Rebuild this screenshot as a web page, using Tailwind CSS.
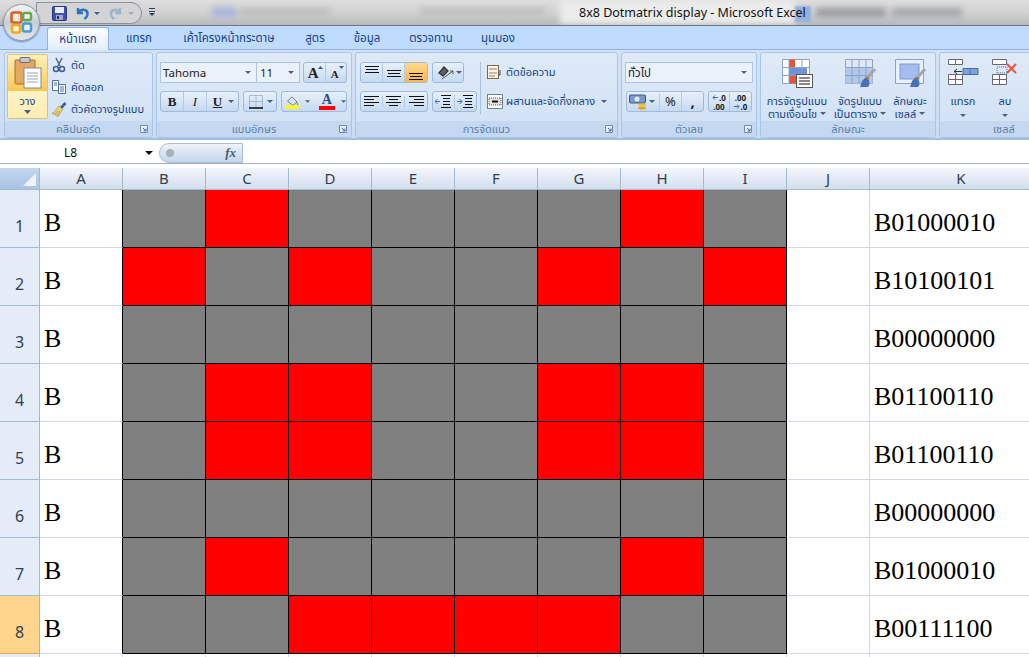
<!DOCTYPE html>
<html lang="th">
<head>
  <meta charset="UTF-8" />
  <title>8x8 Dotmatrix display - Microsoft Excel</title>
  <script src="https://cdn.jsdelivr.net/npm/@tailwindcss/browser@4"></script>
</head>
<body class="relative w-[1029px] h-[657px] overflow-hidden bg-white text-[11px] text-[#15428b] font-['Noto_Sans','Noto_Sans_Thai','Loma','Garuda','DejaVu_Sans',sans-serif]">

  <!-- title bar -->
  <div class="relative h-[26px] border-b border-[#6e7784] bg-gradient-to-b from-[#dedede] via-[#d2d2d2] to-[#b8b9bb] overflow-hidden">
    <div class="absolute left-[212px] top-[7px] w-[24px] h-[10px] bg-[#a9b4dc] blur-[3px]"></div>
    <div class="absolute left-[240px] top-[8px] w-[90px] h-[8px] bg-[#bdbdbd] blur-[3px]"></div>
    <div class="absolute left-[420px] top-[8px] w-[125px] h-[8px] bg-[#bfbfbf] blur-[3px]"></div>
    <div class="absolute left-[560px] top-0 w-[235px] h-[24px] bg-[#ececec] blur-[3px]"></div>
    <div class="absolute left-[795px] top-[6px] w-[16px] h-[16px] bg-[#93b1de] blur-[1px]"></div>
    <div class="absolute left-[816px] top-[8px] w-[70px] h-[9px] bg-[#9a9c9f] blur-[3px]"></div>
    <div class="absolute left-[892px] top-[8px] w-[70px] h-[9px] bg-[#a5a7aa] blur-[3px]"></div>
    <div class="absolute left-[579px] top-[5px] text-[12.500px] leading-[16px] text-[#111] whitespace-nowrap">8x8 Dotmatrix display - Microsoft Excel</div>
    <!-- quick access -->
    <div class="absolute left-[36px] top-[2px] w-[106px] h-[22px] rounded-r-[12px] border border-[#8c9096] bg-[#d2d4d6] flex items-center pl-[15px] gap-[8px]">
      <svg width="15" height="15" viewBox="0 0 15 15"><rect width="14" height="14" x=".5" y=".5" rx="1" fill="#3f51a8" stroke="#28357a"/><rect x="3" y="1" width="9" height="6" fill="#e6ecf8"/><rect x="4" y="9" width="7" height="5" fill="#9fa8cf"/><rect x="5" y="10" width="2" height="3" fill="#28357a"/></svg>
      <svg width="26" height="14" viewBox="0 0 26 14"><path d="M3 2v5h5M3.500 6.500C6 2.500 12 3 12.500 7c.3 2.500-1 4.500-3 6" fill="none" stroke="#2f71bd" stroke-width="2.400"/><path d="M19 6h6l-3 3z" fill="#4a5f84"/></svg>
      <svg width="26" height="14" viewBox="0 0 26 14"><path d="M11 2v5H6M10.500 6.500C8 2.500 2.500 3 2 7c-.3 2.500 1 4.500 3 6" fill="none" stroke="#9db4cb" stroke-width="2.400"/><path d="M19 6h6l-3 3z" fill="#a5adb8"/></svg>
    </div>
    <svg class="absolute left-[149px] top-[8px]" width="7" height="9" viewBox="0 0 7 9"><path d="M0 0h6v1H0zM0 3h6v1H0z" fill="#2c3e63"/><path d="M0 5h6L3 8z" fill="#2c3e63"/></svg>
  </div>

  <!-- office button -->
  <div class="absolute left-[3px] top-[4px] w-[37px] h-[37px] rounded-full border border-[#8e9aa8] bg-gradient-to-b from-[#f4f6f8] via-[#c8ced6] to-[#e4e8ec] shadow-[0_1px_2px_rgba(0,0,0,.4)] flex items-center justify-center z-10">
    <svg width="23" height="23" viewBox="0 0 23 23">
      <rect x="1.500" y="1.500" width="10" height="10" rx="2" fill="#fbeede" stroke="#dd5f26" stroke-width="2.600"/>
      <rect x="13" y="2" width="8" height="7" rx="2" fill="#eef6e6" stroke="#62ab3e" stroke-width="2.400"/>
      <rect x="2" y="14" width="8" height="7.500" rx="2" fill="#fdf3d8" stroke="#f2ab1c" stroke-width="2.600"/>
      <rect x="13" y="12.500" width="8" height="8" rx="2" fill="#e8f2fa" stroke="#4c9ad4" stroke-width="2.400"/>
      <path d="M8 5h7M8 8h7M8 11h7M8 14h7" stroke="#7fa6c8" stroke-dasharray="1.500 1.500"/>
    </svg>
  </div>

  <!-- tabs -->
  <div class="h-[24px] bg-[#bfdbff] flex items-end pl-[47px] text-[11.500px] text-[#15428b] border-b border-[#8db2e3]">
    <div class="relative top-px w-[62px] h-[23px] flex items-center justify-center rounded-t-[3px] border border-b-0 border-[#8db2e3] bg-gradient-to-b from-[#fbfdff] to-[#e3eefb]">หน้าแรก</div>
    <div class="w-[60px] h-[23px] flex items-center justify-center">แทรก</div>
    <div class="w-[120px] h-[23px] flex items-center justify-center">เค้าโครงหน้ากระดาษ</div>
    <div class="w-[52px] h-[23px] flex items-center justify-center">สูตร</div>
    <div class="w-[52px] h-[23px] flex items-center justify-center">ข้อมูล</div>
    <div class="w-[76px] h-[23px] flex items-center justify-center">ตรวจทาน</div>
    <div class="w-[58px] h-[23px] flex items-center justify-center">มุมมอง</div>
  </div>

  <!-- ribbon -->
  <div class="h-[90px] bg-gradient-to-b from-[#d3e3f7] to-[#c8dcf3] border-b-2 border-[#9ec0e6] flex pl-[4px] gap-[3px] pt-[2px] overflow-hidden">

    <!-- clipboard -->
    <section class="w-[149px] shrink-0 flex flex-col rounded-[3px] border border-[#a9c6e6] bg-gradient-to-b from-[#dfeaf8] to-[#d0e1f5] overflow-hidden">
      <div class="flex-1 flex pl-[2px] pt-[1px]">
        <div class="w-[41px] h-[65px] rounded-[2px] border border-[#e0c078] flex flex-col items-center overflow-hidden">
          <div class="w-full h-[36px] bg-gradient-to-b from-[#fff0b8] via-[#ffdc80] to-[#ffc850] flex justify-center pt-[2px]">
            <svg width="28" height="32" viewBox="0 0 28 32"><rect x="1" y="3" width="20" height="24" rx="1" fill="#e4a860" stroke="#a07030"/><rect x="6" y="0.500" width="10" height="5" rx="1" fill="#c4c8d0" stroke="#686c78"/><rect x="10" y="11" width="17" height="20" fill="#fff" stroke="#7a8aa0"/><path d="M13 16h11M13 19h11M13 22h11M13 25h11" stroke="#9aa4b4"/></svg>
          </div>
          <div class="w-full flex-1 bg-gradient-to-b from-[#fff4c8] to-[#ffecb0] flex flex-col items-center pt-[3px] leading-[14px] text-[#15428b]">
            <span>วาง</span>
            <svg class="mt-[2px]" width="7" height="4" viewBox="0 0 7 4"><path d="M0 0h7L3.500 4z" fill="#4a5f84"/></svg>
          </div>
        </div>
        <div class="flex flex-col pt-[3px] pl-[3px] gap-[6px] leading-[16px]">
          <div class="flex items-center gap-[4px] h-[16px]"><svg width="16" height="16" viewBox="0 0 16 16"><path d="M5 1l4 8M11 1L7 9" stroke="#54677f" stroke-width="1.500" fill="none"/><circle cx="5" cy="12" r="2.500" fill="none" stroke="#3a5a9a" stroke-width="1.500"/><circle cx="11" cy="12" r="2.500" fill="none" stroke="#3a5a9a" stroke-width="1.500"/></svg><span>ตัด</span></div>
          <div class="flex items-center gap-[4px] h-[16px]"><svg width="16" height="16" viewBox="0 0 16 16"><path d="M1.500 1.500h6v10h-6z" fill="#fff" stroke="#4a70a8"/><path d="M7.500 5.500h7v9h-7z" fill="#fff" stroke="#4a70a8"/><path d="M3 4h3M3 6h3M9 8h4M9 10h4M9 12h4" stroke="#4a70a8"/></svg><span>คัดลอก</span></div>
          <div class="flex items-center gap-[4px] h-[16px]"><svg width="16" height="16" viewBox="0 0 16 16"><path d="M9 6l4.500-5 2 2L11 8z" fill="#4a5a8a"/><path d="M8 5l3.500 3.500L7 15.500 1 12c2 0 4-2 4-4z" fill="#ecd27c" stroke="#a08840" stroke-width=".6"/><path d="M4 13l3-3M6 14l3-4" stroke="#a08840" stroke-width=".7"/></svg><span>ตัวคัดวางรูปแบบ</span></div>
        </div>
      </div>
      <div class="relative h-[16px] bg-[#c4d9f1] text-center leading-[15px] text-[#5b7ea8]">คลิปบอร์ด<svg class="absolute right-[4px] top-[4px]" width="8" height="8" viewBox="0 0 8 8"><path d="M.5.500h7v7h-7z" fill="#e8f0fa" stroke="#6f8fb4"/><path d="M3 3l3 3M6 3.500V6H3.500" stroke="#4a6a94" fill="none"/></svg></div>
    </section>

    <!-- font -->
    <section class="w-[196px] shrink-0 flex flex-col rounded-[3px] border border-[#a9c6e6] bg-gradient-to-b from-[#dfeaf8] to-[#d0e1f5] overflow-hidden">
      <div class="flex-1 flex flex-col pl-[3px] pt-[9px] gap-[8px]">
        <div class="flex h-[21px]">
          <div class="w-[97px] flex items-center justify-between px-[2px] pr-[5px] border border-[#a9c6e6] bg-[#eaf1fb] text-[11.500px] text-[#222]">Tahoma<svg width="6" height="3" viewBox="0 0 6 3"><path d="M0 0h6L3 3z" fill="#4a5f84"/></svg></div>
          <div class="w-[43px] flex items-center justify-between px-[3px] pr-[5px] border border-l-0 border-[#a9c6e6] bg-[#eaf1fb] text-[11.500px] text-[#222]">11<svg width="6" height="3" viewBox="0 0 6 3"><path d="M0 0h6L3 3z" fill="#4a5f84"/></svg></div>
          <div class="ml-[3px] w-[44px] flex rounded-[3px] border border-[#9ebbdc] bg-gradient-to-b from-[#e8f1fb] to-[#c5d9f1] font-['Liberation_Serif',serif] font-bold text-[#222]">
            <span class="relative w-[23px] pr-[3px] text-[15px] text-center leading-[21px] border-r border-[#b4cbe4]">A<svg class="absolute right-[2px] top-[3px]" width="5" height="3" viewBox="0 0 5 3"><path d="M0 3h5L2.500 0z" fill="#3a5f94"/></svg></span><span class="relative w-[20px] pr-[3px] text-[11px] text-center leading-[23px]">A<svg class="absolute right-[2px] top-[3px]" width="5" height="3" viewBox="0 0 5 3"><path d="M0 0h5L2.500 3z" fill="#3a5f94"/></svg></span>
          </div>
        </div>
        <div class="flex h-[21px] gap-[4px]">
          <div class="w-[79px] flex rounded-[3px] border border-[#9ebbdc] bg-gradient-to-b from-[#e8f1fb] to-[#c5d9f1] text-[#222] font-['Liberation_Serif',serif] text-[13px] leading-[19px]">
            <span class="w-[23px] text-center font-bold border-r border-[#b4cbe4]">B</span>
            <span class="w-[23px] text-center italic border-r border-[#b4cbe4]">I</span>
            <span class="w-[21px] text-center underline font-bold">U</span>
            <span class="w-[10px] flex items-center"><svg width="6" height="3" viewBox="0 0 6 3"><path d="M0 0h6L3 3z" fill="#4a5f84"/></svg></span>
          </div>
          <div class="w-[34px] flex items-center gap-[4px] pl-[5px] rounded-[3px] border border-[#9ebbdc] bg-gradient-to-b from-[#e8f1fb] to-[#c5d9f1]">
            <svg width="14" height="14" viewBox="0 0 14 14"><path d="M.5.500h13v12h-13zM7 .500v12M.5 6.500h13" fill="none" stroke="#7f8fa4" stroke-dasharray="1 1"/><path d="M0 13h14" stroke="#111" stroke-width="1.500"/></svg>
            <svg width="6" height="3" viewBox="0 0 6 3"><path d="M0 0h6L3 3z" fill="#4a5f84"/></svg>
          </div>
          <div class="w-[66px] flex items-center pl-[3px] rounded-[3px] border border-[#9ebbdc] bg-gradient-to-b from-[#e8f1fb] to-[#c5d9f1]">
            <svg width="17" height="16" viewBox="0 0 17 16"><path d="M3 7l5-5 6 6-5 4z" fill="#dfe6f0" stroke="#5a6a84"/><path d="M14 8c1 1.500 2 3 1 3.500s-1.500-1-1-3.500z" fill="#c46a3a"/><rect y="12" width="16" height="4" fill="#ffff00"/></svg>
            <svg class="ml-[5px]" width="6" height="3" viewBox="0 0 6 3"><path d="M0 0h6L3 3z" fill="#4a5f84"/></svg>
            <div class="ml-[9px] w-[16px] flex flex-col items-center font-['Liberation_Serif',serif] font-bold text-[14px] leading-[12px] text-[#2b4c8c]">A<span class="w-[16px] h-[4px] bg-[#ff0000]"></span></div>
            <svg class="ml-[6px]" width="6" height="3" viewBox="0 0 6 3"><path d="M0 0h6L3 3z" fill="#4a5f84"/></svg>
          </div>
        </div>
      </div>
      <div class="relative h-[16px] bg-[#c4d9f1] text-center leading-[15px] text-[#5b7ea8]">แบบอักษร<svg class="absolute right-[4px] top-[4px]" width="8" height="8" viewBox="0 0 8 8"><path d="M.5.500h7v7h-7z" fill="#e8f0fa" stroke="#6f8fb4"/><path d="M3 3l3 3M6 3.500V6H3.500" stroke="#4a6a94" fill="none"/></svg></div>
    </section>

    <!-- alignment -->
    <section class="w-[263px] shrink-0 flex flex-col rounded-[3px] border border-[#a9c6e6] bg-gradient-to-b from-[#dfeaf8] to-[#d0e1f5] overflow-hidden">
      <div class="flex-1 flex pl-[4px] pt-[9px]">
        <div class="flex flex-col gap-[8px]">
          <div class="flex h-[21px] gap-[4px]">
            <div class="w-[68px] flex rounded-[3px] border border-[#9ebbdc] bg-gradient-to-b from-[#e8f1fb] to-[#c5d9f1] overflow-hidden">
              <span class="w-[22px] flex justify-center pt-[3px] border-r border-[#b4cbe4]"><svg width="14" height="8" viewBox="0 0 14 8"><path d="M0 .500h14M1 3.500h12M0 6.500h14" stroke="#111"/></svg></span>
              <span class="w-[22px] flex justify-center pt-[7px] border-r border-[#b4cbe4]"><svg width="14" height="8" viewBox="0 0 14 8"><path d="M0 .500h14M1 3.500h12M0 6.500h14" stroke="#111"/></svg></span>
              <span class="w-[22px] flex justify-center pt-[10px] bg-gradient-to-b from-[#ffd98a] to-[#ffb44a]"><svg width="14" height="8" viewBox="0 0 14 8"><path d="M0 .500h14M1 3.500h12M0 6.500h14" stroke="#111"/></svg></span>
            </div>
            <div class="w-[32px] flex items-center gap-[1px] pl-[4px] rounded-[3px] border border-[#9ebbdc] bg-gradient-to-b from-[#e8f1fb] to-[#c5d9f1]">
              <svg width="18" height="16" viewBox="0 0 18 16"><path d="M2 8l5-6 4 4-5 5z" fill="#5a6070" stroke="#333" stroke-width="1.300"/><path d="M5 14L16 6M13 6h3v3" fill="none" stroke="#555"/></svg>
              <svg width="6" height="3" viewBox="0 0 6 3"><path d="M0 0h6L3 3z" fill="#4a5f84"/></svg>
            </div>
          </div>
          <div class="flex h-[21px] gap-[4px]">
            <div class="w-[68px] flex items-center rounded-[3px] border border-[#9ebbdc] bg-gradient-to-b from-[#e8f1fb] to-[#c5d9f1]">
              <span class="w-[22px] flex justify-center border-r border-[#b4cbe4]"><svg width="15" height="11" viewBox="0 0 15 11"><path d="M0 .500h15M0 3.500h10M0 6.500h15M0 9.500h10" stroke="#111"/></svg></span>
              <span class="w-[22px] flex justify-center border-r border-[#b4cbe4]"><svg width="15" height="11" viewBox="0 0 15 11"><path d="M0 .500h15M3 3.500h9M0 6.500h15M3 9.500h9" stroke="#111"/></svg></span>
              <span class="w-[22px] flex justify-center"><svg width="15" height="11" viewBox="0 0 15 11"><path d="M0 .500h15M5 3.500h10M0 6.500h15M5 9.500h10" stroke="#111"/></svg></span>
            </div>
            <div class="w-[45px] flex items-center rounded-[3px] border border-[#9ebbdc] bg-gradient-to-b from-[#e8f1fb] to-[#c5d9f1]">
              <span class="w-[22px] flex justify-center border-r border-[#b4cbe4]"><svg width="16" height="13" viewBox="0 0 16 13"><path d="M6 .500h10M8 3.500h7M8 6.500h7M8 9.500h7M6 12.500h10" stroke="#111"/><path d="M5 6.500H0M2.500 4L0 6.500 2.500 9" stroke="#3a6fc0" fill="none"/></svg></span>
              <span class="w-[22px] flex justify-center"><svg width="16" height="13" viewBox="0 0 16 13"><path d="M6 .500h10M8 3.500h7M8 6.500h7M8 9.500h7M6 12.500h10" stroke="#111"/><path d="M0 6.500h5M2.500 4L5 6.500 2.500 9" stroke="#3a6fc0" fill="none"/></svg></span>
            </div>
          </div>
        </div>
        <div class="ml-[3px] w-px h-[52px] bg-[#a9c2de]"></div>
        <div class="flex flex-col gap-[8px] pl-[6px]">
          <div class="h-[21px] flex items-center gap-[3px]"><svg width="16" height="15" viewBox="0 0 16 15"><rect x=".5" y=".5" width="11" height="13" fill="#f6f3ea" stroke="#7a6a50"/><path d="M2 4h8M2 8h8M2 11h6" stroke="#b07840"/><path d="M13 5v5h-2" stroke="#444" fill="none"/></svg><span>ตัดข้อความ</span></div>
          <div class="h-[21px] flex items-center gap-[3px]"><svg width="16" height="15" viewBox="0 0 16 15"><rect x=".5" y=".5" width="15" height="14" fill="#fff" stroke="#708090"/><rect x="2" y="4" width="12" height="7" fill="#e6e6e6" stroke="#555" stroke-dasharray="1 1"/><path d="M5 7.500h6" stroke="#111" stroke-width="2"/></svg><span>ผสานและจัดกึ่งกลาง</span><svg class="ml-[3px]" width="6" height="3" viewBox="0 0 6 3"><path d="M0 0h6L3 3z" fill="#4a5f84"/></svg></div>
        </div>
      </div>
      <div class="relative h-[16px] bg-[#c4d9f1] text-center leading-[15px] text-[#5b7ea8]">การจัดแนว<svg class="absolute right-[4px] top-[4px]" width="8" height="8" viewBox="0 0 8 8"><path d="M.5.500h7v7h-7z" fill="#e8f0fa" stroke="#6f8fb4"/><path d="M3 3l3 3M6 3.500V6H3.500" stroke="#4a6a94" fill="none"/></svg></div>
    </section>

    <!-- number -->
    <section class="w-[136px] shrink-0 flex flex-col rounded-[3px] border border-[#a9c6e6] bg-gradient-to-b from-[#dfeaf8] to-[#d0e1f5] overflow-hidden">
      <div class="flex-1 flex flex-col pl-[3px] pt-[9px] gap-[8px]">
        <div class="w-[128px] h-[21px] flex items-center justify-between pl-[2px] pr-[5px] border border-[#a9c6e6] bg-[#eaf1fb] text-[11.500px] text-[#222]">ทั่วไป<svg width="6" height="3" viewBox="0 0 6 3"><path d="M0 0h6L3 3z" fill="#4a5f84"/></svg></div>
        <div class="flex h-[21px] gap-[4px] pl-[1px]">
          <div class="w-[78px] flex items-center rounded-[3px] border border-[#9ebbdc] bg-gradient-to-b from-[#e8f1fb] to-[#c5d9f1] text-[#222]">
            <span class="w-[33px] flex items-center gap-[2px] pl-[2px] border-r border-[#b4cbe4]"><svg width="18" height="16" viewBox="0 0 18 16"><rect x=".5" y="1" width="16" height="8" rx="1" fill="#7a9ac8" stroke="#3a5a8a"/><circle cx="8" cy="5" r="2.500" fill="#dce8f6"/><ellipse cx="13" cy="11" rx="4" ry="1.500" fill="#f0c030"/><ellipse cx="13" cy="14" rx="4" ry="1.500" fill="#e0a820"/></svg><svg width="6" height="3" viewBox="0 0 6 3"><path d="M0 0h6L3 3z" fill="#4a5f84"/></svg></span>
            <span class="w-[23px] text-center text-[13px] leading-[19px] border-r border-[#b4cbe4]">%</span>
            <span class="w-[21px] text-center text-[15px] font-bold leading-[15px]">,</span>
          </div>
          <div class="w-[44px] flex items-center rounded-[3px] border border-[#9ebbdc] bg-gradient-to-b from-[#e8f1fb] to-[#c5d9f1] text-[8px] leading-[9px] font-bold text-[#222]">
            <span class="w-[21px] flex flex-col items-center border-r border-[#b4cbe4]"><span class="flex items-center gap-px"><svg width="6" height="5" viewBox="0 0 6 5"><path d="M6 2.500H1M3 .5l-2 2 2 2" stroke="#3a6fc0" fill="none"/></svg>.0</span><span>.00</span></span>
            <span class="w-[21px] flex flex-col items-center"><span>.00</span><span class="flex items-center gap-px"><svg width="6" height="5" viewBox="0 0 6 5"><path d="M0 2.500h5M3 .5l2 2-2 2" stroke="#3a6fc0" fill="none"/></svg>.0</span></span>
          </div>
        </div>
      </div>
      <div class="relative h-[16px] bg-[#c4d9f1] text-center leading-[15px] text-[#5b7ea8]">ตัวเลข<svg class="absolute right-[4px] top-[4px]" width="8" height="8" viewBox="0 0 8 8"><path d="M.5.500h7v7h-7z" fill="#e8f0fa" stroke="#6f8fb4"/><path d="M3 3l3 3M6 3.500V6H3.500" stroke="#4a6a94" fill="none"/></svg></div>
    </section>

    <!-- styles -->
    <section class="w-[176px] shrink-0 flex flex-col rounded-[3px] border border-[#a9c6e6] bg-gradient-to-b from-[#dfeaf8] to-[#d0e1f5] overflow-hidden">
      <div class="flex-1 flex pl-[5px] pt-[6px] leading-[13px] text-center">
        <div class="w-[62px] flex flex-col items-center">
          <svg width="31" height="29" viewBox="0 0 31 29"><path d="M.5.500h27v24H.5z" fill="#fff" stroke="#8ea4be"/><path d="M7 .500h6v8H7z" fill="#e5533a"/><path d="M7 8.500h18v8H7z" fill="#6a92d8"/><path d="M7 16.500h12v8H7z" fill="#e5533a"/><path d="M7 0v25M20 0v25M0 8.500h28M0 16.500h28" stroke="#8ea4be"/><rect x="14.500" y="15.500" width="16" height="13" fill="#fff" stroke="#555"/><path d="M17 19h11M17 22h11M17 25h11" stroke="#111"/></svg>
          <span class="mt-[6px] whitespace-nowrap">การจัดรูปแบบ</span>
          <span class="flex items-center gap-[3px] whitespace-nowrap">ตามเงื่อนไข<svg width="6" height="3" viewBox="0 0 6 3"><path d="M0 0h6L3 3z" fill="#4a5f84"/></svg></span>
        </div>
        <div class="w-[64px] flex flex-col items-center">
          <svg width="31" height="29" viewBox="0 0 31 29"><path d="M.5.500h27v24H.5z" fill="#dce8f8" stroke="#8ea4be"/><path d="M.5 8h27v16.500H.5z" fill="#b0c8ec"/><path d="M7 0v25M14 0v25M21 0v25M0 8.500h28M0 16.500h28" stroke="#8ea4be"/><path d="M30 10l-8 9" stroke="#a8a8a8" stroke-width="3"/><path d="M21 18l-4 4-2 6h8c2-2 2-6 0-8z" fill="#4a70b8"/><path d="M21 18l3 2" stroke="#b08040" stroke-width="2"/></svg>
          <span class="mt-[6px] whitespace-nowrap">จัดรูปแบบ</span>
          <span class="flex items-center gap-[3px] whitespace-nowrap">เป็นตาราง<svg width="6" height="3" viewBox="0 0 6 3"><path d="M0 0h6L3 3z" fill="#4a5f84"/></svg></span>
        </div>
        <div class="w-[36px] flex flex-col items-center">
          <svg width="31" height="29" viewBox="0 0 31 29"><path d="M.5.500h28v24H.5z" fill="#e8f0fb" stroke="#8ea4be"/><rect x="5" y="5" width="19" height="15" fill="#a4bdf0" stroke="#7f9acf"/><path d="M30 10l-8 9" stroke="#a8a8a8" stroke-width="3"/><path d="M21 18l-4 4-2 6h8c2-2 2-6 0-8z" fill="#4a70b8"/><path d="M21 18l3 2" stroke="#b08040" stroke-width="2"/></svg>
          <span class="mt-[6px] whitespace-nowrap">ลักษณะ</span>
          <span class="flex items-center gap-[3px] whitespace-nowrap">เซลล์<svg width="6" height="3" viewBox="0 0 6 3"><path d="M0 0h6L3 3z" fill="#4a5f84"/></svg></span>
        </div>
      </div>
      <div class="relative h-[16px] bg-[#c4d9f1] text-center leading-[15px] text-[#5b7ea8]">ลักษณะ</div>
    </section>

    <!-- cells -->
    <section class="w-[100px] shrink-0 flex flex-col rounded-[3px] border border-[#a9c6e6] bg-gradient-to-b from-[#dfeaf8] to-[#d0e1f5] overflow-hidden">
      <div class="flex-1 flex pl-[8px] pt-[6px] leading-[13px] text-center">
        <div class="w-[30px] flex flex-col items-center">
          <svg width="31" height="27" viewBox="0 0 31 27"><path d="M.5.500h14v5H.5zM.5 15.500h14v10H.5zM7.500 15.500v10M.5 20.500h14M7.500.500v5" fill="#fff" stroke="#667"/><path d="M15 9.500h15v6H15zM22 9.500v6" fill="#7fa2de" stroke="#4a6ea8"/><path d="M14 12.500H6M9 10l-3 2.500L9 15" stroke="#333" fill="none"/></svg>
          <span class="mt-[8px]">แทรก</span>
          <svg class="mt-[7px]" width="6" height="3" viewBox="0 0 6 3"><path d="M0 0h6L3 3z" fill="#4a5f84"/></svg>
        </div>
        <div class="ml-[12px] w-[30px] flex flex-col items-center">
          <svg width="26" height="27" viewBox="0 0 26 27"><path d="M.5.500h14v5H.5zM.5 15.500h14v10H.5zM7.500 15.500v10M.5 20.500h14" fill="#fff" stroke="#667"/><path d="M5 8h10v6H5z" fill="#dce8f8" stroke="#4a6ea8" stroke-dasharray="1 1"/><path d="M15 5l9 9M24 5l-9 9" stroke="#e8553a" stroke-width="2"/></svg>
          <span class="mt-[8px]">ลบ</span>
          <svg class="mt-[7px]" width="6" height="3" viewBox="0 0 6 3"><path d="M0 0h6L3 3z" fill="#4a5f84"/></svg>
        </div>
      </div>
      <div class="h-[16px] bg-[#c4d9f1] leading-[15px] text-[#5b7ea8] pl-[53px]">เซลล์</div>
    </section>
  </div>

  <!-- formula bar -->
  <div class="mt-[3px] h-[21px] flex border-b border-[#9fb1c6] bg-white text-[12px] text-[#111]">
    <div class="w-[159px] relative flex items-center justify-center pr-[18px]">L8<svg class="absolute right-[6px] top-[8px]" width="8" height="4" viewBox="0 0 8 4"><path d="M0 0h8L4 4z" fill="#111"/></svg></div>
    <div class="w-[84px] rounded-l-[12px] border border-[#a9bcd4] bg-gradient-to-b from-[#eef3fa] to-[#c5d6ec] flex items-center justify-between pl-[6px] pr-[6px]">
      <span class="w-[8px] h-[8px] rounded-full bg-[#a8b0b8]"></span>
      <span class="font-['Liberation_Serif',serif] italic font-bold text-[13px] text-[#4a5a6a]">fx</span>
    </div>
  </div>

  <!-- sheet -->
  <div class="mt-[4px] h-[489px] overflow-hidden">
    <div id="sheet" class="grid grid-cols-[40px_repeat(10,83px)_183px] grid-rows-[22px_repeat(9,58px)] font-['Liberation_Serif',serif] text-[26px] text-black"></div>
  </div>

  <script>
    const headers = ["A", "B", "C", "D", "E", "F", "G", "H", "I", "J", "K"];
    const codes = ["01000010", "10100101", "00000000", "01100110", "01100110", "00000000", "01000010", "00111100"];
    const headCls = "flex items-center justify-center bg-gradient-to-b from-[#f3f6fb] to-[#d3dfee] border-r border-b border-[#a5b9d0] font-['Noto_Sans',sans-serif] text-[15px] text-[#333f50]";
    const rowCls = "flex items-end justify-center pb-[12px] bg-[#e4ecf7] border-r border-b border-[#a5b9d0] font-['Noto_Sans',sans-serif] text-[16px] leading-[18px] text-[#333f50]";
    const rowActiveCls = "flex items-end justify-center pb-[12px] bg-[#ffd58d] border-r border-b border-[#f0a64a] font-['Noto_Sans',sans-serif] text-[16px] leading-[18px] text-[#333f50]";
    const textCls = "flex items-end pl-[4px] pb-[9px] leading-[30px] bg-white border-r border-b border-[#d0d7e5]";
    const textBlackCls = "flex items-end pl-[4px] pb-[9px] leading-[30px] bg-white border-r border-b border-r-black border-b-[#d0d7e5]";
    const blankCls = "bg-white border-r border-b border-[#d0d7e5]";
    const onCls = "bg-[#ff0000] border-r border-b border-black";
    const offCls = "bg-[#808080] border-r border-b border-black";

    let html = `<div class="flex items-end justify-end bg-gradient-to-b from-[#c3d6ee] to-[#a9c3e4] border-r border-b border-[#a5b9d0]"><span class="w-0 h-0 mr-[3px] mb-[3px] border-l-[13px] border-b-[13px] border-l-transparent border-b-[#eef3fa]"></span></div>`;
    html += headers.map(h => `<div class="${headCls}">${h}</div>`).join("");
    codes.forEach((code, i) => {
      html += `<div class="${i === 7 ? rowActiveCls : rowCls}">${i + 1}</div>`;
      html += `<div class="${textBlackCls}">B</div>`;
      for (const bit of code) html += `<div class="${bit === "1" ? onCls : offCls}"></div>`;
      html += `<div class="${blankCls}"></div>`;
      html += `<div class="${textCls}">B${code}</div>`;
    });
    html += `<div class="${rowCls}"></div>` + `<div class="${blankCls}"></div>`.repeat(11);
    document.getElementById("sheet").innerHTML = html;
  </script>
</body>
</html>
